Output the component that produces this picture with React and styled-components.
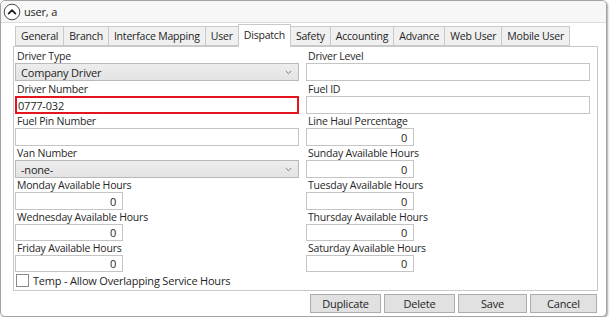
import React from 'react';
import styled, { createGlobalStyle } from 'styled-components';

const GlobalStyle = createGlobalStyle`
  html, body {
    margin: 0;
    padding: 0;
    background: #ffffff;
  }
  body {
    font-family: "Open Sans", "Noto Sans", sans-serif;
    font-size: 10.5px;
    letter-spacing: -0.2px;
    color: #1e1e1e;
  }
`;

const Frame = styled.div`
  box-sizing: border-box;
  width: 607px;
  height: 317px;
  border: 1px solid #a3a3a3;
  border-radius: 5px;
  box-shadow: 1px 1px 2px rgba(0, 0, 0, 0.35);
  background: #ffffff;
  overflow: hidden;
  display: flex;
  flex-direction: column;
`;

const Header = styled.div`
  box-sizing: border-box;
  height: 22px;
  display: flex;
  align-items: center;
  gap: 3px;
  padding-left: 2px;
  background: #f7f7f7;
  border-bottom: 1px solid #dcdcdc;
  flex-shrink: 0;
`;

const HeaderTitle = styled.span`
  font-size: 11px;
  color: #1e1e1e;
`;

const Body = styled.div`
  padding: 1px 8px 0 12px;
  flex: 1;
  display: flex;
  flex-direction: column;
`;

const TabStrip = styled.div`
  display: flex;
  align-items: flex-end;
  height: 22px;
  padding-left: 2px;
  position: relative;
  z-index: 1;
`;

const Tab = styled.div`
  box-sizing: border-box;
  height: ${p => (p.$active ? '23px' : '20px')};
  margin-bottom: ${p => (p.$active ? '-1px' : '0')};
  padding: ${p => (p.$active ? '2px 5px 0' : '1px 5px 0')};
  border: 1px solid #c9c9c9;
  border-bottom: ${p => (p.$active ? 'none' : '1px solid #c9c9c9')};
  margin-right: -1px;
  background: ${p => (p.$active ? '#ffffff' : '#f0f0f0')};
  color: #1e1e1e;
  white-space: nowrap;
  line-height: 16px;
  position: relative;
  z-index: ${p => (p.$active ? 2 : 0)};
`;

const Panel = styled.div`
  box-sizing: border-box;
  height: 245px;
  border: 1px solid #c9c9c9;
  background: #ffffff;
  padding: 2px 7px 0 1px;
`;

const Grid = styled.div`
  display: grid;
  grid-template-columns: 284px 1fr;
  column-gap: 7px;
`;

const Field = styled.div`
  display: flex;
  flex-direction: column;
  height: ${p => p.$h || 32}px;
`;

const Label = styled.div`
  height: 14px;
  line-height: 14px;
  padding-left: 2px;
  white-space: nowrap;
  color: #262626;
`;

const TextBox = styled.div`
  box-sizing: border-box;
  width: ${p => (p.$narrow ? '108px' : '100%')};
  height: 18px;
  border: ${p => (p.$error ? '2px solid #e3151f' : '1px solid #c4c4c4')};
  background: #ffffff;
  display: flex;
  align-items: center;
  justify-content: ${p => (p.$narrow ? 'flex-end' : 'flex-start')};
  padding: ${p => (p.$narrow ? '0 6px 0 0' : p.$error ? '0 1px' : '0 4px')};
  font-size: 11px;
  color: #1e1e1e;
`;

const Combo = styled.div`
  box-sizing: border-box;
  width: 100%;
  height: 18px;
  border: 1px solid #b9b9b9;
  background: linear-gradient(#ededed, #e3e3e3);
  display: flex;
  align-items: center;
  justify-content: space-between;
  padding: 0 6px 0 5px;
  font-size: 11px;
`;

const CheckRow = styled.div`
  display: flex;
  align-items: center;
  gap: 4px;
  margin-top: 1px;
  padding-left: 1px;
  font-size: 11px;
`;

const CheckBox = styled.span`
  box-sizing: border-box;
  width: 13px;
  height: 13px;
  border: 1px solid #8a8a8a;
  background: #ffffff;
`;

const ButtonRow = styled.div`
  display: flex;
  justify-content: flex-end;
  gap: 3px;
  margin-top: 3px;
  padding-right: 1px;
`;

const Button = styled.div`
  box-sizing: border-box;
  width: ${p => p.$w || 71}px;
  height: 19px;
  border: 1px solid #adadad;
  background: #e1e1e1;
  display: flex;
  align-items: center;
  justify-content: center;
  font-size: 11px;
  color: #1e1e1e;
`;

const CollapseIcon = () => (
  <svg width="18" height="18" viewBox="0 0 18 18">
    <circle cx="9" cy="9" r="7.8" fill="#ffffff" stroke="#4a4a4a" strokeWidth="1" />
    <path d="M5.6 10.6 L9 7.2 L12.4 10.6" fill="none" stroke="#1e1e1e" strokeWidth="1.8" strokeLinecap="round" strokeLinejoin="round" />
  </svg>
);

const Chevron = () => (
  <svg width="7" height="5" viewBox="0 0 7 5">
    <path d="M0.8 1 L3.5 3.7 L6.2 1" fill="none" stroke="#7a7a7a" strokeWidth="1" />
  </svg>
);

const tabs = ['General', 'Branch', 'Interface Mapping', 'User', 'Dispatch', 'Safety', 'Accounting', 'Advance', 'Web User', 'Mobile User'];

const rows = [
  [{ label: 'Driver Type', combo: 'Company Driver' }, { label: 'Driver Level', text: '' }],
  [{ label: 'Driver Number', text: '0777-032', error: true }, { label: 'Fuel ID', text: '' }],
  [{ label: 'Fuel Pin Number', text: '' }, { label: 'Line Haul Percentage', num: '0' }],
  [{ label: 'Van Number', combo: '-none-' }, { label: 'Sunday Available Hours', num: '0' }],
  [{ label: 'Monday Available Hours', num: '0' }, { label: 'Tuesday Available Hours', num: '0' }],
  [{ label: 'Wednesday Available Hours', num: '0' }, { label: 'Thursday Available Hours', num: '0' }],
  [{ label: 'Friday Available Hours', num: '0' }, { label: 'Saturday Available Hours', num: '0' }],
];

const renderField = (f, h) => (
  <Field key={f.label} $h={h}>
    <Label>{f.label}</Label>
    {f.combo !== undefined ? (
      <Combo>
        <span>{f.combo}</span>
        <Chevron />
      </Combo>
    ) : f.num !== undefined ? (
      <TextBox $narrow>{f.num}</TextBox>
    ) : (
      <TextBox $error={f.error}>{f.text}</TextBox>
    )}
  </Field>
);

export default function App() {
  return (
    <>
      <GlobalStyle />
      <Frame>
        <Header>
          <CollapseIcon />
          <HeaderTitle>user, a</HeaderTitle>
        </Header>
        <Body>
          <TabStrip>
            {tabs.map(t => (
              <Tab key={t} $active={t === 'Dispatch'}>{t}</Tab>
            ))}
          </TabStrip>
          <Panel>
            <Grid>
              {rows.map((r, i) => r.map(f => renderField(f, i === 0 ? 33 : i >= 5 ? 31 : 32)))}
            </Grid>
            <CheckRow>
              <CheckBox />
              <span>Temp - Allow Overlapping Service Hours</span>
            </CheckRow>
          </Panel>
          <ButtonRow>
            <Button $w={71}>Duplicate</Button>
            <Button $w={71}>Delete</Button>
            <Button $w={69}>Save</Button>
            <Button $w={67}>Cancel</Button>
          </ButtonRow>
        </Body>
      </Frame>
    </>
  );
}
